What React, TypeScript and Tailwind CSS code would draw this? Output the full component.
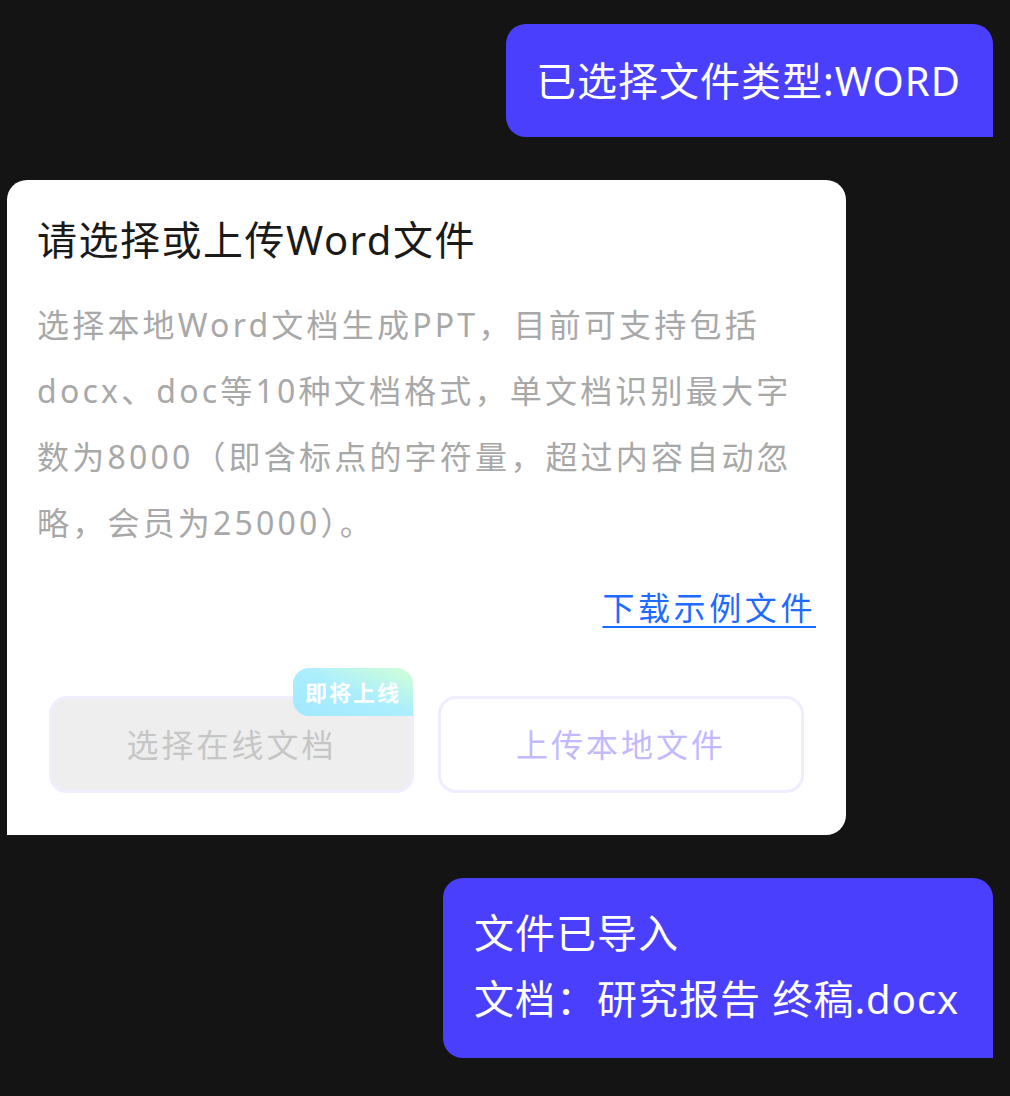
import React from "react";

const FONT = "font-['Noto_Sans','Noto_Sans_CJK_SC',sans-serif]";

export default function App() {
  return (
    <div className={`min-h-[1096px] w-full bg-[#141414] ${FONT} flex flex-col`}>
      {/* bubble 1 */}
      <div className="self-end mr-[17px] mt-[24px] w-[487px] h-[113px] flex items-center pl-[30px] rounded-[20px] rounded-br-none bg-[#4b3ffe] text-white text-[40px] leading-[56px] tracking-[1px] whitespace-nowrap">
        已选择文件类型:WORD
      </div>

      {/* card */}
      <div className="ml-[7px] mt-[43px] w-[839px] bg-white rounded-[20px] rounded-bl-none pt-[32px] px-[30px] pb-[42px]">
        <div className="text-[40px] leading-[56px] text-[#1a1a1a] tracking-[1.5px] whitespace-nowrap">
          请选择或上传Word文件
        </div>
        <div className="mt-[24px] text-[32px] leading-[66px] text-[#a8a8a8] tracking-[3.2px] whitespace-nowrap">
          <div>选择本地Word文档生成PPT，目前可支持包括</div>
          <div>docx、doc等10种文档格式，单文档识别最大字</div>
          <div>数为8000（即含标点的字符量，超过内容自动忽</div>
          <div>略，会员为25000）。</div>
        </div>
        <div className="mt-[19px] flex justify-end">
          <span className="text-[32px] leading-[66px] text-[#1f6bff] tracking-[3.6px] underline decoration-2 underline-offset-[6px] whitespace-nowrap">
            下载示例文件
          </span>
        </div>
        <div className="mt-[55px] ml-[12px] flex gap-[24px]">
          <div className="relative w-[365px] shrink-0">
            <div className="h-[97px] flex items-center justify-center rounded-[18px] border-[3px] border-[#efedff] bg-[#eeeeee] text-[32px] text-[#c6c6c6] tracking-[3px]">
              选择在线文档
            </div>
            <div className="absolute top-[-28px] right-[1px] w-[120px] h-[48px] flex items-center justify-center rounded-[16px] rounded-br-none bg-gradient-to-tr from-[#a2e8ff] via-[#aaeeff] to-[#d2ffd3] text-white text-[22px] font-bold tracking-[2px]">
              即将上线
            </div>
          </div>
          <div className="w-[366px] shrink-0 h-[97px] flex items-center justify-center rounded-[18px] border-[3px] border-[#efedff] bg-white text-[32px] text-[#c3b9ff] tracking-[3px]">
            上传本地文件
          </div>
        </div>
      </div>

      {/* bubble 3 */}
      <div className="self-end mr-[17px] mt-[43px] w-[550px] pl-[31px] pt-[22px] pb-[26px] rounded-[20px] rounded-br-none bg-[#4b3ffe] text-white text-[40px] leading-[66px] tracking-[1px] whitespace-nowrap">
        <div>文件已导入</div>
        <div>文档：研究报告 终稿.docx</div>
      </div>
    </div>
  );
}
